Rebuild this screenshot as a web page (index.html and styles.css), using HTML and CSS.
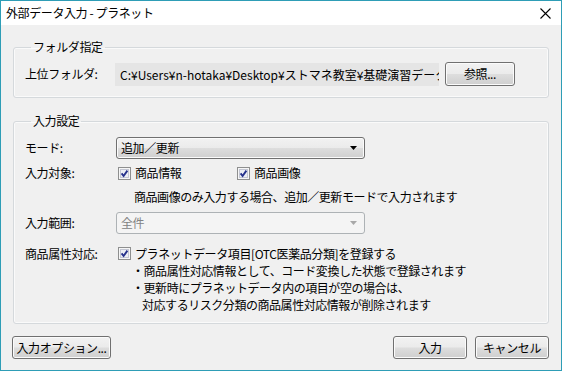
FILE: index.html
```html
<!DOCTYPE html>
<html lang="ja">
<head>
<meta charset="utf-8">
<title>外部データ入力 - プラネット</title>
<link rel="stylesheet" href="styles.css">
</head>
<body>
<div class="window">
  <div class="titlebar">
    <span class="title">外部データ入力 - プラネット</span>
    <svg class="close" width="11" height="11" viewBox="0 0 11 11"><path d="M0.5 0.5 L10.5 10.5 M10.5 0.5 L0.5 10.5" stroke="#000" stroke-width="1.1" fill="none"/></svg>
  </div>
  <div class="content">
    <fieldset class="group group-folder">
      <legend>フォルダ指定</legend>
      <div class="row folder-row">
        <span class="label">上位フォルダ:</span>
        <div class="path">C:¥Users¥n-hotaka¥Desktop¥ストマネ教室¥基礎演習データ</div>
        <button class="btn browse">参照...</button>
      </div>
    </fieldset>

    <fieldset class="group group-input">
      <legend>入力設定</legend>
      <div class="row mode-row">
        <span class="label">モード:</span>
        <div class="select">
          <span>追加／更新</span>
          <svg class="arrow" width="7" height="4" viewBox="0 0 7 4"><path d="M0 0H7L3.5 4Z" fill="#000"/></svg>
        </div>
      </div>
      <div class="row target-row">
        <span class="label">入力対象:</span>
        <div class="checks">
          <span class="check first">
            <svg class="cb" width="13" height="13" viewBox="0 0 13 13"><rect x="0.5" y="0.5" width="12" height="12" fill="#f6f6f6" stroke="#8e8f8f"/><rect x="2.5" y="2.5" width="8" height="8" fill="#eceef4" stroke="#c3c6d3"/><path d="M3.6 6.4 L5.6 9 L9.4 3.6" stroke="#26328c" stroke-width="1.9" fill="none"/></svg>
            商品情報
          </span>
          <span class="check">
            <svg class="cb" width="13" height="13" viewBox="0 0 13 13"><rect x="0.5" y="0.5" width="12" height="12" fill="#f6f6f6" stroke="#8e8f8f"/><rect x="2.5" y="2.5" width="8" height="8" fill="#eceef4" stroke="#c3c6d3"/><path d="M3.6 6.4 L5.6 9 L9.4 3.6" stroke="#26328c" stroke-width="1.9" fill="none"/></svg>
            商品画像
          </span>
        </div>
      </div>
      <div class="note">商品画像のみ入力する場合、追加／更新モードで入力されます</div>
      <div class="row range-row">
        <span class="label">入力範囲:</span>
        <div class="select disabled">
          <span>全件</span>
          <svg class="arrow" width="7" height="4" viewBox="0 0 7 4"><path d="M0 0H7L3.5 4Z" fill="#a8a8a8"/></svg>
        </div>
      </div>
      <div class="row attr-row">
        <span class="label">商品属性対応:</span>
        <div class="attr">
          <span class="check">
            <svg class="cb" width="13" height="13" viewBox="0 0 13 13"><rect x="0.5" y="0.5" width="12" height="12" fill="#f6f6f6" stroke="#8e8f8f"/><rect x="2.5" y="2.5" width="8" height="8" fill="#eceef4" stroke="#c3c6d3"/><path d="M3.6 6.4 L5.6 9 L9.4 3.6" stroke="#26328c" stroke-width="1.9" fill="none"/></svg>
            プラネットデータ項目[OTC医薬品分類]を登録する
          </span>
          <div class="sub">・商品属性対応情報として、コード変換した状態で登録されます</div>
          <div class="sub">・更新時にプラネットデータ内の項目が空の場合は、</div>
          <div class="sub indent">対応するリスク分類の商品属性対応情報が削除されます</div>
        </div>
      </div>
    </fieldset>

    <div class="footer">
      <button class="btn options">入力オプション...</button>
      <div class="spacer"></div>
      <button class="btn ok">入力</button>
      <button class="btn cancel">キャンセル</button>
    </div>
  </div>
</div>
</body>
</html>
```

FILE: styles.css
```css
* { box-sizing: border-box; }
html, body { margin: 0; padding: 0; }
body {
  font-family: "Noto Sans CJK JP", "Noto Sans", sans-serif;
  font-size: 12px;
  color: #000;
  background: #f0f0f0;
}
.window {
  width: 562px;
  height: 371px;
  border: 1px solid #2e9db6;
  background: #f0f0f0;
  display: flex;
  flex-direction: column;
}
.titlebar {
  height: 24px;
  background: #fff;
  display: flex;
  align-items: center;
  padding: 0 10px 0 5px;
  flex: none;
}
.title {
  flex: 1;
  font-size: 12px;
  letter-spacing: -0.4px;
  line-height: 16px;
}
.close { display: block; margin-top: 1px; }

.content {
  padding: 14px 12px 0 12px;
  flex: 1;
  display: flex;
  flex-direction: column;
}
.group {
  margin: 0;
  border: 1px solid #d5d9dc;
  border-radius: 3px;
  box-shadow: inset 0 0 0 1px #fafafa;
  padding: 7px 11px 11px 11px;
  min-width: 0;
}
.group legend {
  padding: 0 2px;
  margin-left: 6px;
  line-height: 16px;
  letter-spacing: -0.4px;
}
.group-input {
  margin-top: 15px;
  padding-top: 0;
  padding-bottom: 10px;
}
.row {
  display: flex;
  align-items: center;
}
.label {
  width: 91px;
  flex: none;
  letter-spacing: -0.4px;
  line-height: 16px;
}
.folder-row { height: 24px; }
.folder-row .label { width: 90px; }
.path {
  width: 324px;
  height: 23px;
  background: #e5e5e5;
  line-height: 23px;
  padding-left: 5px;
  white-space: nowrap;
  overflow: hidden;
  letter-spacing: 0;
  flex: none;
}
.btn {
  font-family: inherit;
  font-size: 12px;
  color: #000;
  height: 24px;
  border: 1px solid #707070;
  border-radius: 3px;
  background: linear-gradient(#f2f2f2 0%, #ebebeb 48%, #dddddd 52%, #cfcfcf 100%);
  box-shadow: inset 0 0 0 1px #fbfbfb;
  padding: 0;
  letter-spacing: -0.4px;
  line-height: 20px;
}
.browse {
  margin-left: 6px;
  width: 70px;
  flex: none;
}
.select {
  width: 249px;
  height: 22px;
  border: 1px solid #707070;
  border-radius: 3px;
  background: linear-gradient(#f2f2f2 0%, #ebebeb 48%, #dddddd 52%, #cfcfcf 100%);
  box-shadow: inset 0 0 0 1px #fbfbfb;
  display: flex;
  align-items: center;
  padding: 0 7px 0 4px;
  letter-spacing: -0.4px;
  flex: none;
}
.select span { flex: 1; line-height: 16px; }
.select .arrow { display: block; }
.select.disabled {
  background: #f4f4f4;
  border-color: #adb2b5;
  box-shadow: none;
  color: #838383;
}
.mode-row { margin-top: 8px; height: 22px; }
.target-row { margin-top: 6px; height: 16px; }
.checks { display: flex; align-items: center; }
.check {
  display: flex;
  align-items: center;
  line-height: 16px;
  letter-spacing: -0.4px;
}
.check .cb { display: block; margin: 0 4px 0 2px; flex: none; }
.check.first { width: 119px; }
.note {
  margin-top: 8px;
  margin-left: 109px;
  line-height: 16px;
  letter-spacing: -0.45px;
}
.range-row { margin-top: 7px; height: 22px; }
.attr-row {
  margin-top: 11px;
  align-items: flex-start;
}
.attr-row .label { line-height: 17px; }
.attr { line-height: 17px; }
.attr .check { line-height: 17px; }
.sub {
  margin-left: 16px;
  letter-spacing: -0.45px;
  white-space: nowrap;
}
.sub.indent { padding-left: 10px; }

.footer {
  margin-top: 12px;
  display: flex;
  align-items: center;
}
.footer .btn { height: 23px; }
.options { width: 99px; margin-left: -1px; }
.spacer { flex: 1; }
.ok { width: 74px; }
.cancel { width: 74px; margin-left: 8px; }
```
